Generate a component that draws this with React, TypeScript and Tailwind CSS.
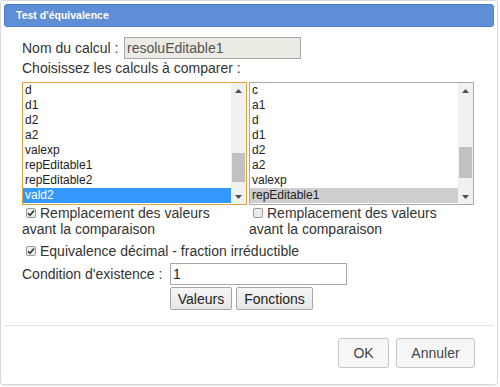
import React from "react";

const LEFT_ITEMS = ["d", "d1", "d2", "a2", "valexp", "repEditable1", "repEditable2", "vald2"];
const RIGHT_ITEMS = ["c", "a1", "d", "d1", "d2", "a2", "valexp", "repEditable1"];

function Arrow({ down }: { down?: boolean }) {
  return (
    <svg width="7" height="4" viewBox="0 0 7 4">
      <path d={down ? "M0 0h7L3.5 4z" : "M3.5 0L7 4H0z"} fill="#505050" />
    </svg>
  );
}

function ScrollBar({ thumbClass }: { thumbClass: string }) {
  return (
    <div className="w-[15px] shrink-0 bg-[#f1f1f1] flex flex-col">
      <div className="h-[15px] flex items-center justify-center">
        <Arrow />
      </div>
      <div className="flex-1 flex flex-col px-[1px]">
        <div className={`bg-[#c1c1c1] ${thumbClass}`} />
      </div>
      <div className="h-[15px] flex items-center justify-center">
        <Arrow down />
      </div>
    </div>
  );
}

function ListBox({
  items,
  selected,
  focused,
}: {
  items: string[];
  selected: number;
  focused?: boolean;
}) {
  return (
    <div
      className={`w-[225px] h-[123px] border flex ${
        focused ? "border-[#e6a23c]" : "border-[#a9a9a9]"
      }`}
    >
      <div className="flex-1 flex flex-col text-[12px] leading-[15px] text-[#222]">
        {items.map((it, i) => (
          <div
            key={i}
            className={`h-[15px] pl-[2px] ${
              i === selected
                ? focused
                  ? "bg-[#3399ff] text-white"
                  : "bg-[#cecece]"
                : ""
            }`}
          >
            {it}
          </div>
        ))}
      </div>
      <ScrollBar thumbClass={focused ? "mt-[55px] h-[29px]" : "mt-[49px] h-[31px]"} />
    </div>
  );
}

function Check({ checked }: { checked?: boolean }) {
  return (
    <span className="w-[10px] h-[10px] shrink-0 ml-[4px] mr-[4px] border border-[#9a9a9a] rounded-[2px] bg-[#ececec] flex items-center justify-center">
      {checked && (
        <svg width="8" height="8" viewBox="0 0 8 8">
          <path d="M1 4.2l2 2L7 1.5" stroke="#333" strokeWidth="1.6" fill="none" />
        </svg>
      )}
    </span>
  );
}

export default function App() {
  return (
    <div className="w-[500px] h-[387px] bg-white font-['Liberation_Sans',Arial,sans-serif]">
      <div className="w-[498px] h-[385px] border border-[#d9d9d9] rounded-[3px] p-[3px] flex flex-col shadow-[0_1px_1px_rgba(0,0,0,0.08)]">
        <div className="h-[23px] bg-[#5e8ed5] border border-[#4d7ec8] rounded-[3px] pl-[11px] flex items-center text-white font-bold text-[10.5px]">
          Test d'équivalence
        </div>

        <div className="pl-[18px] text-[14px] text-[#333] leading-[16px]">
          <div className="mt-[10px] flex items-center h-[22px]">
            <span className="w-[102px]">Nom du calcul :</span>
            <div className="w-[177px] h-[22px] bg-[#ebebe4] border border-[#a9a9a9] pl-[2px] flex items-center text-[#545454]">
              resoluEditable1
            </div>
          </div>
          <div className="mt-[1px] h-[16px]">Choisissez les calculs à comparer :</div>

          <div className="mt-[6px] flex gap-[2px]">
            <ListBox items={LEFT_ITEMS} selected={7} focused />
            <ListBox items={RIGHT_ITEMS} selected={7} />
          </div>

          <div className="flex">
            <div className="w-[227px]">
              <div className="flex items-center h-[16px]">
                <Check checked />
                <span>Remplacement des valeurs</span>
              </div>
              <div className="h-[16px]">avant la comparaison</div>
            </div>
            <div>
              <div className="flex items-center h-[16px]">
                <Check />
                <span>Remplacement des valeurs</span>
              </div>
              <div className="h-[16px]">avant la comparaison</div>
            </div>
          </div>

          <div className="mt-[6px] flex items-center h-[16px]">
            <Check checked />
            <span>Equivalence décimal - fraction irréductible</span>
          </div>

          <div className="mt-[4px] flex items-center h-[22px]">
            <span className="w-[148px]">Condition d'existence :</span>
            <div className="w-[177px] h-[22px] bg-white border border-[#a9a9a9] pl-[2px] flex items-center text-[#222]">
              1
            </div>
          </div>

          <div className="mt-[2px] pl-[148px] flex gap-[4px]">
            <button className="w-[62px] h-[23px] border border-[#a6a6a6] rounded-[2px] bg-gradient-to-b from-[#f6f6f6] to-[#e6e6e6] text-[#222] text-[14px]">
              Valeurs
            </button>
            <button className="w-[77px] h-[23px] border border-[#a6a6a6] rounded-[2px] bg-gradient-to-b from-[#f6f6f6] to-[#e6e6e6] text-[#222] text-[14px]">
              Fonctions
            </button>
          </div>
        </div>

        <div className="mt-auto mb-[13px] border-t border-[#e3e3e3] pt-[12px] pr-[19px] flex justify-end gap-[7px]">
          <button className="w-[51px] h-[30px] border border-[#c5c5c5] rounded-[3px] bg-[#f6f6f6] text-[#454545] text-[14px]">
            OK
          </button>
          <button className="w-[79px] h-[30px] border border-[#c5c5c5] rounded-[3px] bg-[#f6f6f6] text-[#454545] text-[14px]">
            Annuler
          </button>
        </div>
      </div>
    </div>
  );
}
